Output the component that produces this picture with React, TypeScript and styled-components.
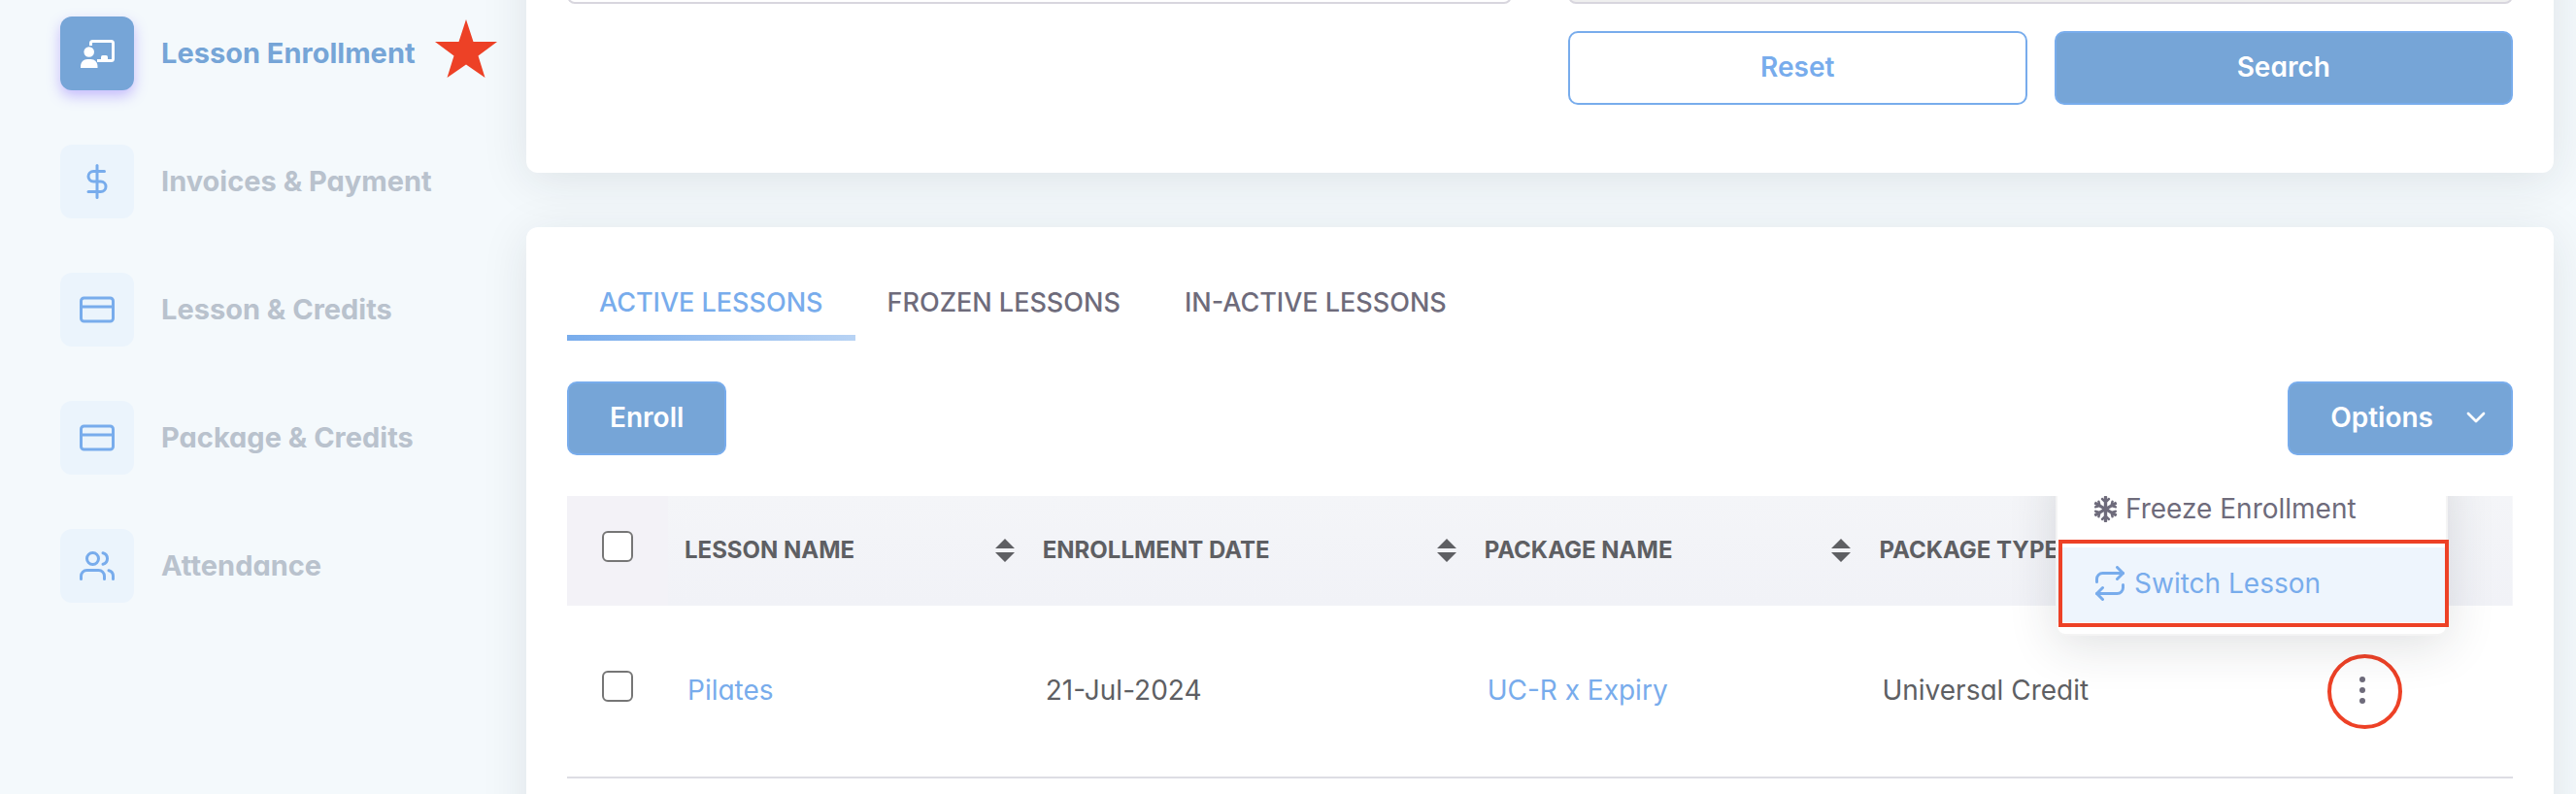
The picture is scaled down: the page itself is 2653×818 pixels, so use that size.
import React from 'react';
import styled, { createGlobalStyle, css } from 'styled-components';
import { ChevronDown } from 'lucide-react';
import { FaSnowflake } from 'react-icons/fa';
import { FiCreditCard, FiDollarSign, FiRepeat, FiUsers } from 'react-icons/fi';

const GlobalStyle = createGlobalStyle`
  * { box-sizing: border-box; }
  body {
    margin: 0;
    overflow: hidden;
    background: #f4f9fc;
    color: #5e5f63;
    font-family: Inter, "Open Sans", sans-serif;
    font-feature-settings: "cv11";
    font-size: 28px;
    line-height: 40px;
  }
  button, input { font: inherit; font-feature-settings: inherit; }
  a { color: #78acec; text-decoration: none; }
`;

const RED = '#ed4126';

const Page = styled.div`
  display: flex;
  height: 100vh;
  min-height: 600px;
  overflow: hidden;
`;

const Sidebar = styled.nav`
  flex: none;
  width: 542px;
  padding: 17px 0 0 62px;
`;

const NavList = styled.ul`
  display: flex;
  flex-direction: column;
  gap: 56px;
  margin: 0;
  padding: 0;
  list-style: none;
`;

const NavItem = styled.li`
  display: flex;
  align-items: center;
`;

const NavLink = styled.a<{ $active?: boolean }>`
  display: flex;
  align-items: center;
  gap: 28px;
  font-size: 29px;
  font-weight: 700;
  white-space: nowrap;
  color: ${(p) => (p.$active ? '#76a5d7' : '#b9c2cd')};
`;

const NavIcon = styled.span<{ $active?: boolean }>`
  display: flex;
  align-items: center;
  justify-content: center;
  width: 76px;
  height: 76px;
  border-radius: 12px;
  color: #78acec;
  background: #ebf4fc;
  ${(p) =>
    p.$active &&
    css`
      color: #fff;
      background: #76a5d7;
      box-shadow: 0 6px 14px rgba(120, 90, 255, 0.38);
    `}
`;

const Star = styled.svg`
  width: 64px;
  height: 60px;
  margin: 0 0 10px 20px;
`;

const Main = styled.main`
  flex: 1;
  min-width: 0;
  display: flex;
  flex-direction: column;
  gap: 56px;
  margin-top: -72px;
  padding-right: 23px;
`;

const Card = styled.section<{ $fill?: boolean }>`
  padding: 0 42px;
  background: #fff;
  border-radius: ${(p) => (p.$fill ? '12px 12px 0 0' : '12px')};
  box-shadow: 0 8px 48px rgba(34, 41, 47, 0.1);
  ${(p) => p.$fill && 'flex: 1;'}
`;

const FilterForm = styled.form`
  display: grid;
  grid-template-columns: 1fr 1fr;
  column-gap: 58px;
  row-gap: 28px;
  padding-bottom: 70px;
`;

const Field = styled.input`
  width: 100%;
  height: 76px;
  padding: 0 28px;
  border: 2px solid #d8d6de;
  border-radius: 8px;
  background: #fff;
  &:disabled { background: #efefef; }
`;

const FormButtons = styled.div`
  grid-column: 2;
  display: grid;
  grid-template-columns: 1fr 1fr;
  gap: 28px;
`;

const Button = styled.button<{ $outline?: boolean }>`
  display: flex;
  align-items: center;
  justify-content: center;
  gap: 28px;
  height: 76px;
  padding: 0 42px 2px;
  border: 2px solid #78acec;
  border-radius: 10px;
  font-weight: 600;
  color: ${(p) => (p.$outline ? '#78acec' : '#fff')};
  background: ${(p) => (p.$outline ? '#fff' : '#76a5d7')};
`;

const OptionsButton = styled(Button)`
  padding-right: 20px;
`;

const Tabs = styled.div`
  display: flex;
  padding-top: 40px;
`;

const Tab = styled.button<{ $active?: boolean }>`
  height: 77px;
  padding: 4px 33px 0;
  border: 0;
  border-bottom: 6px solid transparent;
  background: none;
  font-size: 27px;
  font-weight: 500;
  color: ${(p) => (p.$active ? '#78acec' : '#6e6b7b')};
  ${(p) => p.$active && 'border-image: linear-gradient(90deg, #78acec, #b8d3f4) 1;'}
`;

const Toolbar = styled.div`
  display: flex;
  justify-content: space-between;
  padding: 42px 0;
`;

const TableWrap = styled.div`
  position: relative;
  overflow: hidden;
  height: 420px;
`;

const Table = styled.table`
  width: 100%;
  border-collapse: collapse;
  table-layout: fixed;
`;

const Col = styled.col<{ $w?: string }>`
  width: ${(p) => p.$w ?? 'auto'};
`;

const HeadRow = styled.tr`
  height: 113px;
  background: linear-gradient(#f4f5f8, #f1f2f7);
`;

const HeadCell = styled.th`
  padding: 0 12px 2px 17px;
  font-size: 24px;
  font-weight: 700;
  text-align: left;
  white-space: nowrap;
`;

const HeadLabel = styled.div`
  display: flex;
  align-items: center;
  justify-content: space-between;
`;

const CheckHead = styled.th`
  padding: 0;
  background: #f3f2f7;
`;

const BodyRow = styled.tr`
  height: 177px;
  border-bottom: 2px solid #dddde4;
`;

const Cell = styled.td`
  padding: 0 20px 2px;
  white-space: nowrap;
`;

const CheckCell = styled.td`
  padding: 0;
`;

const Checkbox = styled.input`
  appearance: none;
  display: block;
  width: 32px;
  height: 32px;
  margin: 0 0 10px 36px;
  border: 2px solid #767676;
  border-radius: 6px;
  background: #fff;
`;

const MoreButton = styled.button`
  display: flex;
  align-items: center;
  justify-content: center;
  width: 77px;
  height: 77px;
  margin-left: 58px;
  padding: 0 6px 2px 0;
  border: 4px solid ${RED};
  border-radius: 50%;
  background: none;
  color: #6e6b7b;
`;

const Menu = styled.div`
  position: absolute;
  top: -42px;
  right: 67px;
  width: 404px;
  padding: 16px 0 12px;
  background: #fff;
  border: 2px solid rgba(34, 41, 47, 0.05);
  border-radius: 10px;
  box-shadow: 0 10px 50px rgba(34, 41, 47, 0.14);
`;

const MenuItem = styled.button<{ $current?: boolean }>`
  position: relative;
  display: flex;
  align-items: center;
  gap: 7px;
  width: 100%;
  height: 77px;
  padding: 0 36px 3px;
  border: 0;
  line-height: 24px;
  color: ${(p) => (p.$current ? '#78acec' : '#6e6b7b')};
  background: ${(p) => (p.$current ? '#eef5fd' : '#fff')};
  ${(p) =>
    p.$current &&
    css`
      &::after {
        content: '';
        position: absolute;
        inset: -8px -3px -5px 1px;
        border: 4px solid ${RED};
      }
    `}
`;

const LessonIcon = () => (
  <svg width="35" height="29" viewBox="0 0 35 29" aria-hidden="true">
    <path d="M10.500 6V3.500Q10.500 1.500 12.500 1.500H31.500Q33.500 1.500 33.500 3.500V19.500Q33.500 21.500 31.500 21.500H17" fill="none" stroke="currentColor" strokeWidth="3" />
    <path d="M21 21v-3.200q0-1.800 1.800-1.800h3.400q1.800 0 1.800 1.800V21z" fill="currentColor" />
    <circle cx="8.700" cy="12.500" r="5.300" fill="currentColor" />
    <path d="M0 29v-1.500C0 23 3 20 7 20h3.500c4 0 7 3 7 7.500V29z" fill="currentColor" />
  </svg>
);

const SortIcon = () => (
  <svg width="20" height="24" viewBox="0 0 20 24" aria-hidden="true">
    <path d="M10 0l10 10H0zM10 24L0 14h20z" fill="#5e5f63" />
  </svg>
);

const DotsIcon = () => (
  <svg width="6" height="28" viewBox="0 0 6 28" aria-hidden="true">
    <circle cx="3" cy="3" r="3" fill="currentColor" />
    <circle cx="3" cy="14" r="3" fill="currentColor" />
    <circle cx="3" cy="25" r="3" fill="currentColor" />
  </svg>
);

const navItems = [
  { label: 'Lesson Enrollment', icon: <LessonIcon />, active: true },
  { label: 'Invoices & Payment', icon: <FiDollarSign size={36} /> },
  { label: 'Lesson & Credits', icon: <FiCreditCard size={36} /> },
  { label: 'Package & Credits', icon: <FiCreditCard size={36} /> },
  { label: 'Attendance', icon: <FiUsers size={36} /> },
];

const tabs = ['ACTIVE LESSONS', 'FROZEN LESSONS', 'IN-ACTIVE LESSONS'];
const columns = ['LESSON NAME', 'ENROLLMENT DATE', 'PACKAGE NAME', 'PACKAGE TYPE'];

export default function App() {
  return (
    <>
      <GlobalStyle />
      <Page>
        <Sidebar>
          <NavList>
            {navItems.map((item) => (
              <NavItem key={item.label}>
                <NavLink href="#" $active={item.active}>
                  <NavIcon $active={item.active}>{item.icon}</NavIcon>
                  {item.label}
                </NavLink>
                {item.active && (
                  <Star viewBox="0 0 64 60" aria-hidden="true">
                    <path d="M32 0l7.500 23H64L44.500 37.500 51.500 60 32 46.500 12.500 60l7-22.500L0 23h24.500z" fill={RED} />
                  </Star>
                )}
              </NavItem>
            ))}
          </NavList>
        </Sidebar>
        <Main>
          <Card>
            <FilterForm>
              <Field aria-label="Lesson" />
              <Field aria-label="Package" disabled />
              <FormButtons>
                <Button type="button" $outline>Reset</Button>
                <Button type="button">Search</Button>
              </FormButtons>
            </FilterForm>
          </Card>
          <Card $fill>
            <Tabs role="tablist">
              {tabs.map((t, i) => (
                <Tab key={t} role="tab" aria-selected={i === 0} $active={i === 0}>{t}</Tab>
              ))}
            </Tabs>
            <Toolbar>
              <Button>Enroll</Button>
              <OptionsButton>
                Options
                <ChevronDown size={32} strokeWidth={2} />
              </OptionsButton>
            </Toolbar>
            <TableWrap>
              <Table>
                <colgroup>
                  <Col $w="104px" />
                  <Col $w="18.4%" />
                  <Col $w="22.7%" />
                  <Col $w="20.3%" />
                  <Col $w="21%" />
                  <Col />
                </colgroup>
                <thead>
                  <HeadRow>
                    <CheckHead><Checkbox type="checkbox" aria-label="Select all lessons" /></CheckHead>
                    {columns.map((c) => (
                      <HeadCell key={c}>
                        <HeadLabel>{c}<SortIcon /></HeadLabel>
                      </HeadCell>
                    ))}
                    <HeadCell />
                  </HeadRow>
                </thead>
                <tbody>
                  <BodyRow>
                    <CheckCell><Checkbox type="checkbox" aria-label="Select Pilates" /></CheckCell>
                    <Cell><a href="#">Pilates</a></Cell>
                    <Cell>21-Jul-2024</Cell>
                    <Cell><a href="#">UC-R x Expiry</a></Cell>
                    <Cell>Universal Credit</Cell>
                    <CheckCell><MoreButton aria-label="Row actions"><DotsIcon /></MoreButton></CheckCell>
                  </BodyRow>
                </tbody>
              </Table>
              <Menu>
                <MenuItem><FaSnowflake size={27} />Freeze Enrollment</MenuItem>
                <MenuItem $current><FiRepeat size={36} />Switch Lesson</MenuItem>
              </Menu>
            </TableWrap>
          </Card>
        </Main>
      </Page>
    </>
  );
}
